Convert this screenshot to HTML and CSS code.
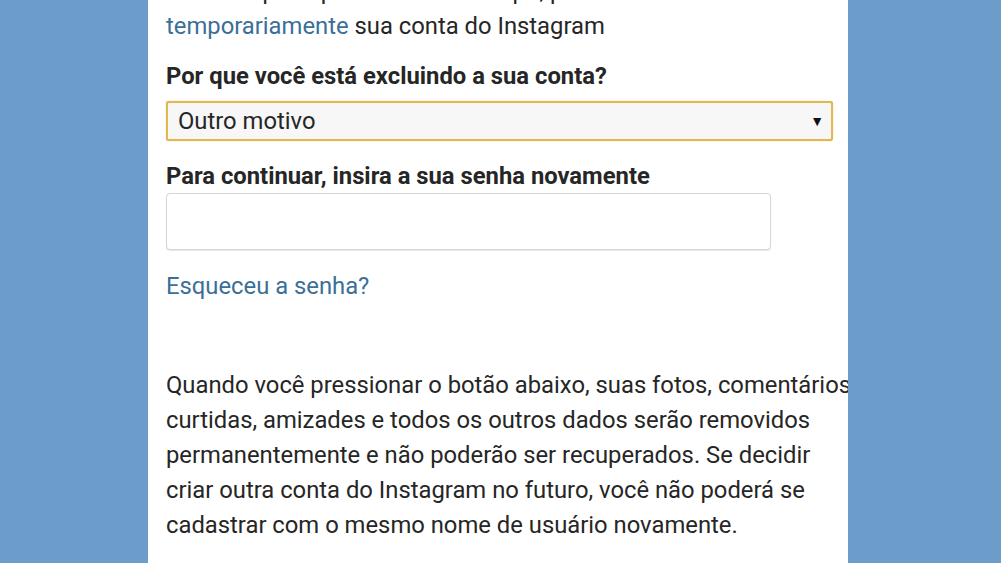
FILE: index.html
```html
<!DOCTYPE html>
<html lang="pt-BR">
<head>
<meta charset="utf-8">
<title>Excluir conta</title>
<link rel="stylesheet" href="styles.css">
</head>
<body>
<div class="stage">
  <main class="panel">
    <p class="intro">Se você quer apenas dar um tempo, pode desativar<br><a class="link" href="#">temporariamente</a> sua conta do Instagram</p>
    <label class="label" for="reason">Por que você está excluindo a sua conta?</label>
    <div class="select">
      <span>Outro motivo</span>
      <span class="caret">▼</span>
    </div>
    <label class="label label-pw" for="pw">Para continuar, insira a sua senha novamente</label>
    <div class="input" id="pw"></div>
    <a class="link forgot" href="#">Esqueceu a senha?</a>
    <p class="warning">Quando você pressionar o botão abaixo, suas fotos, comentários,<br>curtidas, amizades e todos os outros dados serão removidos<br>permanentemente e não poderão ser recuperados. Se decidir<br>criar outra conta do Instagram no futuro, você não poderá se<br>cadastrar com o mesmo nome de usuário novamente.</p>
  </main>
</div>
</body>
</html>
```

FILE: styles.css
```css
html, body {
  margin: 0;
  padding: 0;
  height: 100%;
}
body {
  background: #6b9cca;
  font-family: Roboto, "Noto Sans", "Liberation Sans", sans-serif;
  color: #262626;
  overflow: hidden;
}
.stage {
  height: 563px;
  display: flex;
}
.panel {
  margin-left: 148px;
  width: 700px;
  background: #ffffff;
  padding: 0 0 0 18px;
  box-sizing: border-box;
  overflow: hidden;
  display: flex;
  flex-direction: column;
  align-items: flex-start;
}
.intro {
  margin: -26px 0 0 0;
  font-size: 23.8px;
  line-height: 35px;
  white-space: nowrap;
}
.link {
  color: #3b6f98;
  text-decoration: none;
}
.label {
  font-weight: 700;
  font-size: 23.8px;
  line-height: 28px;
  margin-top: 18px;
}
.select {
  margin-top: 11px;
  width: 667px;
  height: 40px;
  box-sizing: border-box;
  border: 2px solid #e3b851;
  border-radius: 3px;
  background: #f7f7f8;
  display: flex;
  align-items: center;
  justify-content: space-between;
  padding: 0 7px 0 10px;
  font-size: 23.8px;
  box-shadow: 0 0 1px #c9a040;
}
.caret {
  font-size: 14px;
  color: #111;
}
.label-pw {
  margin-top: 21px;
}
.input {
  margin-top: 3px;
  width: 605px;
  height: 57px;
  box-sizing: border-box;
  border: 1px solid #d6d6d6;
  border-radius: 4px;
  background: #fff;
  box-shadow: 0 1px 1px #e6e6e6;
}
.forgot {
  margin-top: 22px;
  font-size: 23.8px;
  line-height: 28px;
}
.warning {
  margin: 68px 0 0 0;
  font-size: 23.8px;
  line-height: 35px;
  white-space: nowrap;
}
```
